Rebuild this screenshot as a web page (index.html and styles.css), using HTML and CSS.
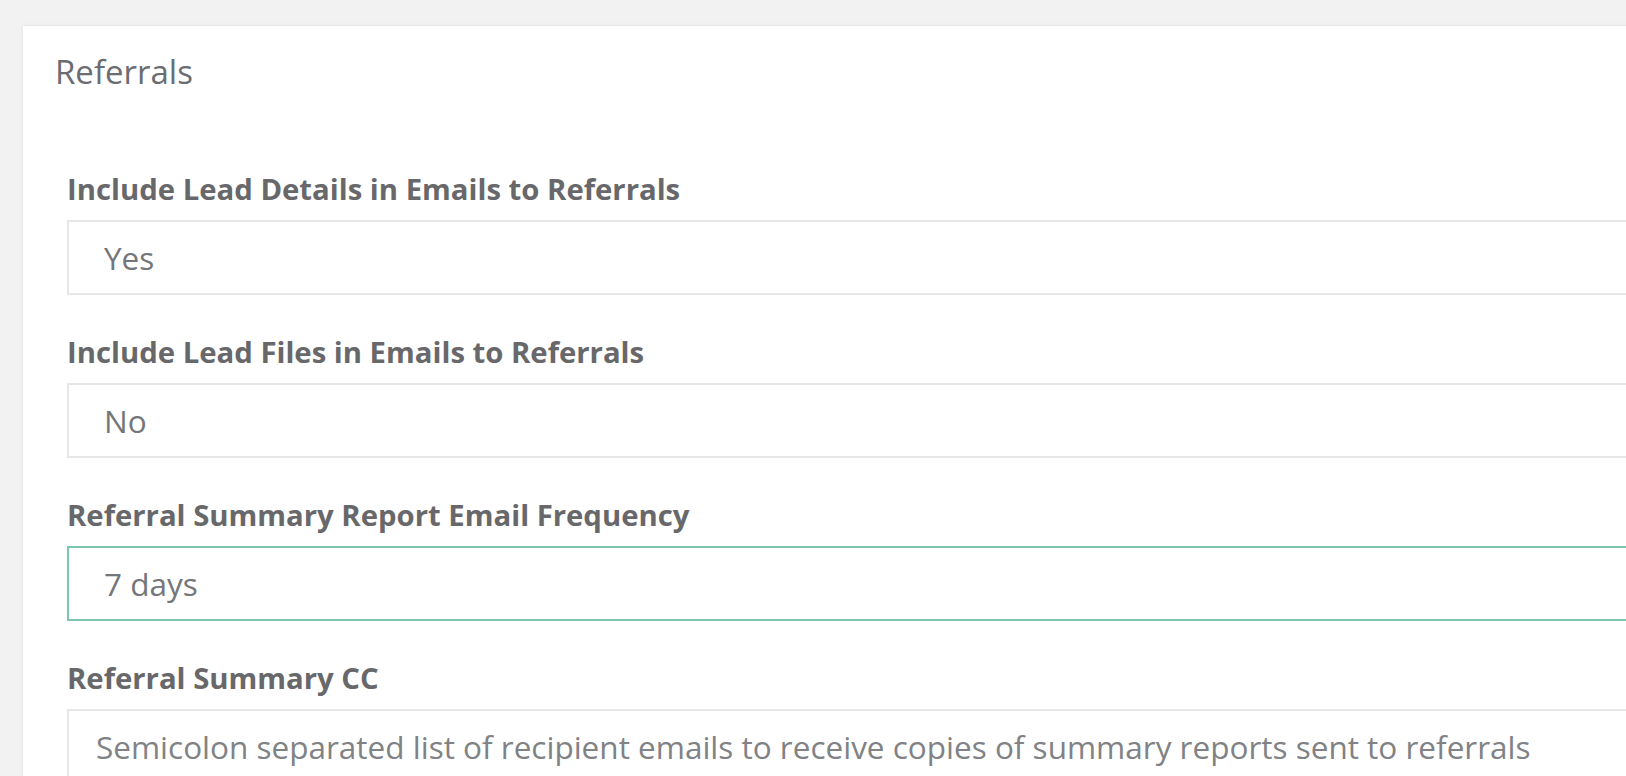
FILE: index.html
```html
<!DOCTYPE html>
<html lang="en">
<head>
    <meta charset="UTF-8">
    <meta name="viewport" content="width=device-width, initial-scale=1.0">
    <title>Referrals</title>
    <link rel="stylesheet" href="styles.css">
</head>
<body>
    <div class="panel">
        <div class="panel-heading">Referrals</div>

        <div class="panel-body">
            <div class="form-group">
                <label for="leadDetails">Include Lead Details in Emails to Referrals</label>
                <select id="leadDetails" class="form-control">
                    <option value="yes" selected>Yes</option>
                    <option value="no">No</option>
                </select>
            </div>

            <div class="form-group">
                <label for="leadFiles">Include Lead Files in Emails to Referrals</label>
                <select id="leadFiles" class="form-control">
                    <option value="yes">Yes</option>
                    <option value="no" selected>No</option>
                </select>
            </div>

            <div class="form-group">
                <label for="frequency">Referral Summary Report Email Frequency</label>
                <select id="frequency" class="form-control focused">
                    <option value="1">1 day</option>
                    <option value="7" selected>7 days</option>
                    <option value="14">14 days</option>
                    <option value="30">30 days</option>
                </select>
            </div>

            <div class="form-group">
                <label for="summaryCc">Referral Summary CC</label>
                <input type="text" id="summaryCc" class="form-control" placeholder="Semicolon separated list of recipient emails to receive copies of summary reports sent to referrals">
            </div>
        </div>
    </div>
</body>
</html>
```

FILE: styles.css
```css
body {
    font-family: 'Open Sans', 'Noto Sans', sans-serif;
    background-color: #f2f2f2;
    margin: 0;
    padding: 0;
    overflow: hidden;
    height: 100vh;
}
.panel {
    width: 1800px;
    margin: 26px 0 0 23px;
    background: #ffffff;
    box-shadow: 0px 0px 4px rgba(0, 0, 0, 0.08);
    min-height: 900px;
}
.panel-heading {
    padding: 28px 32px 0;
    font-size: 33px;
    line-height: 35px;
    color: #6b6d72;
}
.panel-body {
    padding: 81px 44px 0;
}
.form-group {
    margin-bottom: 38px;
}
label {
    display: block;
    font-size: 29.3px;
    line-height: 38px;
    font-weight: 700;
    color: #68686b;
    margin-bottom: 12px;
}
.form-control {
    display: block;
    box-sizing: border-box;
    width: 100%;
    height: 75px;
    border: 2px solid #e6e8e8;
    border-radius: 0;
    background: #ffffff;
    font-family: inherit;
    font-size: 31.5px;
    color: #74767a;
    padding: 0 27px;
    outline: none;
}
select.form-control {
    -webkit-appearance: none;
    appearance: none;
    padding-left: 35px;
}
.form-control::placeholder {
    color: #808285;
}
.focused {
    border-color: #7cc7ab;
}
```
